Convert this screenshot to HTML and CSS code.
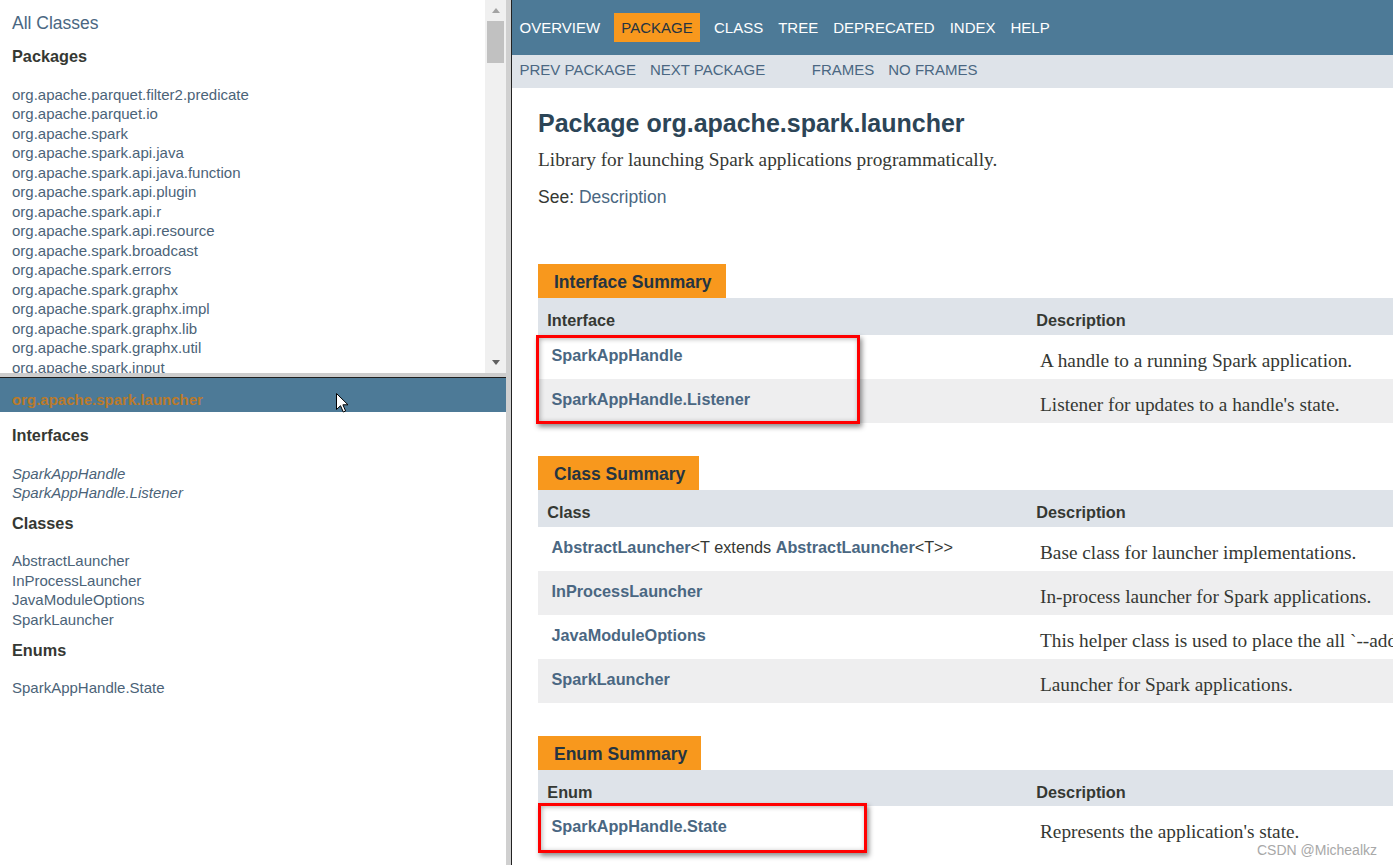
FILE: index.html
```html
<!DOCTYPE html>
<html lang="en">
<head>
<meta charset="utf-8">
<title>org.apache.spark.launcher</title>
<link rel="stylesheet" href="styles.css">
</head>
<body>
<div class="frameset">
  <div class="left">
    <div class="top-frame">
      <div class="frame-content">
        <div class="index-header"><a href="#">All Classes</a></div>
        <h2 class="index-h2 first-h2">Packages</h2>
        <ul class="index-list list-top">
          <li><a href="#">org.apache.parquet.filter2.predicate</a></li>
          <li><a href="#">org.apache.parquet.io</a></li>
          <li><a href="#">org.apache.spark</a></li>
          <li><a href="#">org.apache.spark.api.java</a></li>
          <li><a href="#">org.apache.spark.api.java.function</a></li>
          <li><a href="#">org.apache.spark.api.plugin</a></li>
          <li><a href="#">org.apache.spark.api.r</a></li>
          <li><a href="#">org.apache.spark.api.resource</a></li>
          <li><a href="#">org.apache.spark.broadcast</a></li>
          <li><a href="#">org.apache.spark.errors</a></li>
          <li><a href="#">org.apache.spark.graphx</a></li>
          <li><a href="#">org.apache.spark.graphx.impl</a></li>
          <li><a href="#">org.apache.spark.graphx.lib</a></li>
          <li><a href="#">org.apache.spark.graphx.util</a></li>
          <li><a href="#">org.apache.spark.input</a></li>
        </ul>
      </div>
      <div class="scrollbar">
        <div class="sb-arrow sb-up"></div>
        <div class="sb-thumb"></div>
        <div class="sb-track"></div>
        <div class="sb-arrow sb-down"></div>
      </div>
    </div>
    <div class="hdivider"></div>
    <div class="bottom-frame">
      <h1 class="bar"><a href="#">org.apache.spark.launcher</a></h1>
      <div class="frame-content">
        <h2 class="index-h2 first-h2-b">Interfaces</h2>
        <ul class="index-list list-top">
          <li><a href="#" class="iface">SparkAppHandle</a></li>
          <li><a href="#" class="iface">SparkAppHandle.Listener</a></li>
        </ul>
        <h2 class="index-h2">Classes</h2>
        <ul class="index-list">
          <li><a href="#">AbstractLauncher</a></li>
          <li><a href="#">InProcessLauncher</a></li>
          <li><a href="#">JavaModuleOptions</a></li>
          <li><a href="#">SparkLauncher</a></li>
        </ul>
        <h2 class="index-h2">Enums</h2>
        <ul class="index-list">
          <li><a href="#">SparkAppHandle.State</a></li>
        </ul>
      </div>
    </div>
  </div>
  <div class="vdivider"></div>
  <div class="right">
    <div class="topnav">
      <ul class="navlist">
        <li><a href="#">OVERVIEW</a></li>
        <li class="active">PACKAGE</li>
        <li>CLASS</li>
        <li><a href="#">TREE</a></li>
        <li><a href="#">DEPRECATED</a></li>
        <li><a href="#">INDEX</a></li>
        <li><a href="#">HELP</a></li>
      </ul>
    </div>
    <div class="subnav">
      <ul class="navlist first-list">
        <li><a href="#">PREV PACKAGE</a></li>
        <li><a href="#">NEXT PACKAGE</a></li>
      </ul>
      <ul class="navlist">
        <li><a href="#">FRAMES</a></li>
        <li><a href="#">NO FRAMES</a></li>
      </ul>
    </div>
    <div class="header">
      <h1 class="title">Package org.apache.spark.launcher</h1>
      <div class="block">Library for launching Spark applications programmatically.</div>
      <p class="see">See: <a href="#">Description</a></p>
    </div>
    <div class="summaries">
      <section class="summary">
        <div class="tab">Interface Summary</div>
        <table class="sum-table">
          <colgroup><col class="c1"><col class="c2"></colgroup>
          <tr class="head"><th>Interface</th><th>Description</th></tr>
          <tr class="row"><td class="col-first"><a href="#">SparkAppHandle</a></td><td class="col-last">A handle to a running Spark application.</td></tr>
          <tr class="row alt"><td class="col-first"><a href="#">SparkAppHandle.Listener</a></td><td class="col-last">Listener for updates to a handle's state.</td></tr>
        </table>
      </section>
      <section class="summary">
        <div class="tab">Class Summary</div>
        <table class="sum-table">
          <colgroup><col class="c1"><col class="c2"></colgroup>
          <tr class="head"><th>Class</th><th>Description</th></tr>
          <tr class="row"><td class="col-first"><a href="#">AbstractLauncher</a>&lt;T extends <a href="#">AbstractLauncher</a>&lt;T&gt;&gt;</td><td class="col-last">Base class for launcher implementations.</td></tr>
          <tr class="row alt"><td class="col-first"><a href="#">InProcessLauncher</a></td><td class="col-last">In-process launcher for Spark applications.</td></tr>
          <tr class="row"><td class="col-first"><a href="#">JavaModuleOptions</a></td><td class="col-last">This helper class is used to place the all `--add-opens` options required by Spark when using Java 17.</td></tr>
          <tr class="row alt"><td class="col-first"><a href="#">SparkLauncher</a></td><td class="col-last">Launcher for Spark applications.</td></tr>
        </table>
      </section>
      <section class="summary">
        <div class="tab">Enum Summary</div>
        <table class="sum-table">
          <colgroup><col class="c1"><col class="c2"></colgroup>
          <tr class="head head-enum"><th>Enum</th><th>Description</th></tr>
          <tr class="row"><td class="col-first"><a href="#">SparkAppHandle.State</a></td><td class="col-last">Represents the application's state.</td></tr>
        </table>
      </section>
    </div>
    <div class="mark mark-1"></div>
    <div class="mark mark-2"></div>
  </div>
</div>
<div class="watermark">CSDN @Michealkz</div>
<svg class="cursor" width="13" height="20" viewBox="0 0 13 20" aria-hidden="true">
  <path d="M0.5 0.5 L0.5 16.5 L4.5 12.7 L7.3 19 L9.6 18 L6.9 11.8 L12 11.8 Z" fill="#ffffff" stroke="#000000" stroke-width="1" stroke-linejoin="miter"/>
</svg>
</body>
</html>
```

FILE: styles.css
```css
* { box-sizing: border-box; }
html, body { margin: 0; padding: 0; }
body {
  width: 1393px;
  height: 865px;
  overflow: hidden;
  position: relative;
  background: #ffffff;
  color: #353833;
  font-family: "Liberation Sans", Arial, sans-serif;
}
a { color: #4a6782; text-decoration: none; }
ul { list-style: none; margin: 0; padding: 0; }
h1, h2, p { margin: 0; }

.frameset { display: flex; height: 865px; }

/* ---------- left frames ---------- */
.left { width: 506px; flex: none; display: flex; flex-direction: column; }
.top-frame { height: 373px; flex: none; display: flex; overflow: hidden; }
.frame-content { flex: 1; padding-left: 12px; overflow: hidden; min-width: 0; }

.index-header { padding-top: 12.5px; font-size: 17.5px; line-height: 20px; }
.index-h2 { font-size: 16.25px; line-height: 19px; font-weight: bold; color: #353833; margin-top: 10.5px; }
.first-h2 { margin-top: 14px; }
.first-h2-b { margin-top: 13.5px; }
.index-list { margin-top: 19px; }
.index-list.list-top { margin-top: 20px; }
.index-list li { font-size: 15px; line-height: 17px; padding-bottom: 2.5px; white-space: nowrap; }
.index-list li a { color: #4b6378; }
.iface { font-style: italic; }

.scrollbar { width: 21px; flex: none; background: #f0f0f0; display: flex; flex-direction: column; align-items: center; }
.sb-arrow { height: 21px; width: 100%; flex: none; display: flex; align-items: center; justify-content: center; }
.sb-arrow::before { content: ""; width: 0; height: 0; border-left: 4.5px solid transparent; border-right: 4.5px solid transparent; }
.sb-up::before { border-bottom: 5px solid #a3a3a3; }
.sb-down::before { border-top: 5px solid #606060; }
.sb-thumb { width: 17px; height: 42px; flex: none; background: #c1c1c1; }
.sb-track { flex: 1; }

.hdivider { height: 5px; flex: none; background: #cdcdcd; border-bottom: 1px solid #1e1e1e; }

.bottom-frame { flex: 1; overflow: hidden; }
.bar {
  height: 34px;
  background: #4d7a97;
  padding: 12.5px 0 0 12px;
  font-size: 15px;
  line-height: 17px;
  font-weight: bold;
  white-space: nowrap;
}
.bar a { color: #bb7a2a; }

.vdivider { width: 5px; flex: none; background: #d0d0d0; }

/* ---------- right frame ---------- */
.right { flex: 1; min-width: 0; overflow: hidden; position: relative; border-left: 1px solid #222222; }

.navlist { display: flex; }
.topnav { height: 55px; background: #4d7a97; padding-top: 12.5px; }
.topnav li { padding: 6.25px 7.5px; font-size: 15px; line-height: 17px; color: #ffffff; white-space: nowrap; }
.topnav li a { color: #ffffff; }
.topnav li.active { background: #f8981d; color: #253441; margin: 0 6.25px; }

.subnav { height: 33px; background: #dee3e9; display: flex; padding-top: 0; }
.subnav li { padding: 6px 7.5px; font-size: 15px; line-height: 17px; white-space: nowrap; }
.subnav .first-list { margin-right: 31.5px; }
.subnav li + li { padding-left: 6.5px; }

.header { padding: 0 26px; }
.title { margin-top: 20.5px; font-size: 25px; line-height: 29px; font-weight: bold; color: #2c4557; white-space: nowrap; }
.block { margin-top: 11.5px; font-family: "Liberation Serif", "Times New Roman", serif; font-size: 19.3px; line-height: 21px; color: #353833; white-space: nowrap; }
.see { margin-top: 17px; font-size: 17.5px; line-height: 20px; white-space: nowrap; }

.summaries { padding: 0 26px; margin-top: 57px; }
.summary + .summary { margin-top: 33px; }
.tab {
  width: fit-content;
  height: 34px;
  background: #f8981d;
  color: #253441;
  font-size: 17.5px;
  font-weight: bold;
  line-height: 20px;
  padding: 8.2px 14px 0 16px;
  white-space: nowrap;
}
.sum-table { width: 1100px; border-collapse: collapse; table-layout: fixed; }
.sum-table .c1 { width: 489px; }
.sum-table tr.head { height: 37px; background: #dee3e9; }
.sum-table tr.head-enum { height: 36px; }
.sum-table th {
  text-align: left;
  vertical-align: top;
  padding: 13px 0 0 9.3px;
  font-size: 16.25px;
  line-height: 19px;
  font-weight: bold;
  color: #353833;
}
.sum-table tr.head-enum th { padding-top: 12.5px; }
.sum-table tr.row { height: 44px; background: #ffffff; }
.sum-table tr.alt { background: #eeeeef; }
.sum-table td { vertical-align: top; white-space: nowrap; overflow: hidden; }
.col-first { padding: 11px 0 0 13.5px; font-size: 16.25px; line-height: 19px; color: #353833; }
.col-first a { font-weight: bold; }
.col-last { padding: 15px 0 0 13px; font-family: "Liberation Serif", "Times New Roman", serif; font-size: 19.3px; line-height: 21px; color: #353833; }

.mark {
  position: absolute;
  border: 3px solid #ff0000;
  box-shadow: 2px 3px 5px rgba(0, 0, 0, 0.45), inset 1px 1px 5px rgba(0, 0, 0, 0.3);
}
.mark-1 { left: 24px; top: 335px; width: 324px; height: 89px; }
.mark-2 { left: 26px; top: 803px; width: 329px; height: 50px; }

.watermark {
  position: absolute;
  left: 1257px;
  top: 842px;
  font-size: 14px;
  line-height: 16px;
  color: #a8a8a8;
  white-space: nowrap;
}
.cursor { position: absolute; left: 336px; top: 393px; }
```
